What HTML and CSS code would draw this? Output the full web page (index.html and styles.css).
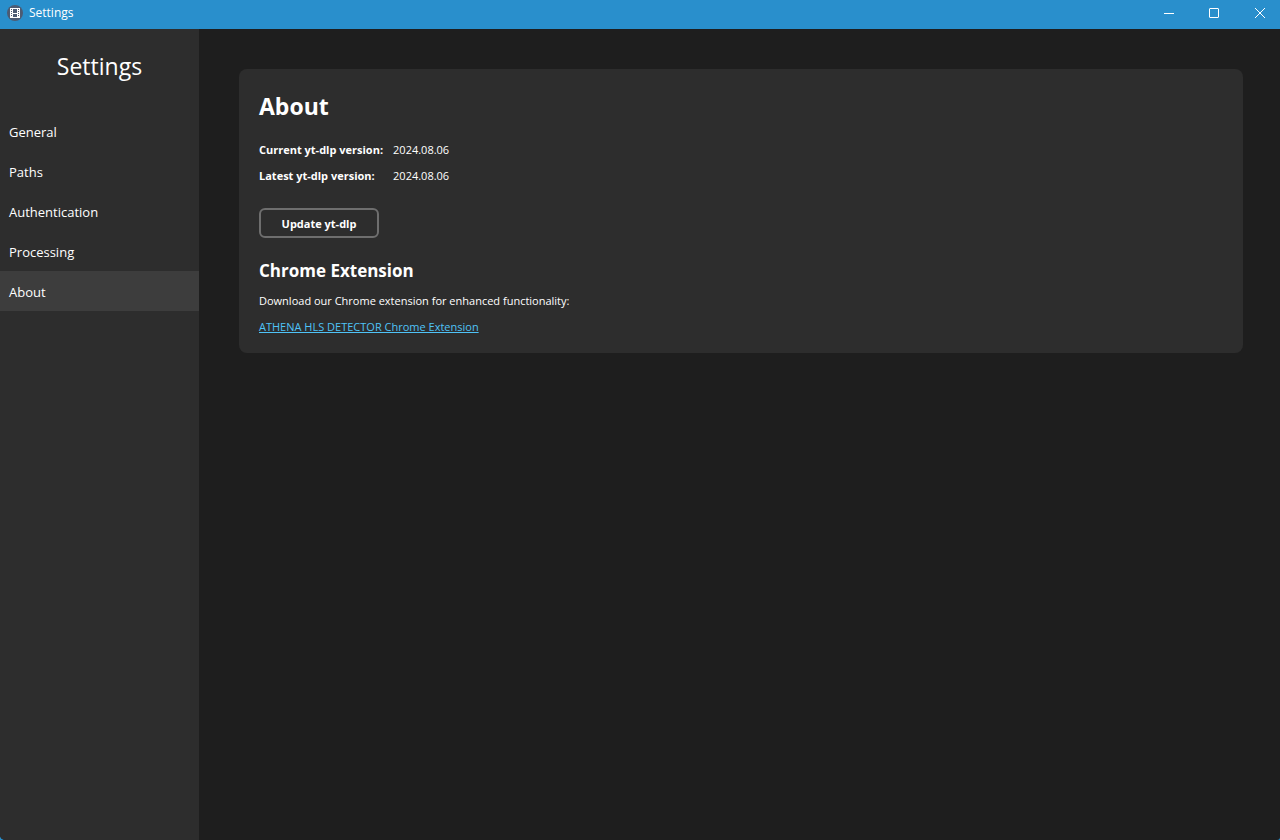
FILE: index.html
```html
<!DOCTYPE html>
<html lang="en">
<head>
<meta charset="utf-8">
<meta name="viewport" content="width=device-width, initial-scale=1">
<title>Settings</title>
<link rel="stylesheet" href="styles.css">
</head>
<body>
<div class="window">
  <header class="titlebar">
    <svg class="app-icon" width="16" height="16" viewBox="0 0 16 16" aria-hidden="true">
      <circle cx="8" cy="8" r="8" fill="#4d5b73"/>
      <path d="M3 3h10v10H3z" fill="#fff"/>
      <path d="M6 4h4v4H6zM6 9h4v3H6zM4 4h1v1H4zM4 6h1v1H4zM4 8h1v1H4zM4 10h1v1H4zM11 4h1v1h-1zM11 6h1v1h-1zM11 8h1v1h-1zM11 10h1v1h-1z" fill="#4d5b73"/>
    </svg>
    <span class="titlebar-text">Settings</span>
    <div class="window-controls">
      <button class="window-button" type="button" aria-label="Minimize">
        <svg width="12" height="12" viewBox="0 0 12 12"><path d="M2 6.5h10" fill="none" stroke="#fff"/></svg>
      </button>
      <button class="window-button" type="button" aria-label="Maximize">
        <svg width="12" height="12" viewBox="0 0 12 12"><rect x="1.5" y="1.5" width="9" height="9" rx=".5" fill="none" stroke="#fff"/></svg>
      </button>
      <button class="window-button" type="button" aria-label="Close">
        <svg width="12" height="12" viewBox="0 0 12 12"><path d="M1 1l10 10M11 1L1 11" fill="none" stroke="#fff"/></svg>
      </button>
    </div>
  </header>
  <div class="layout">
    <aside class="sidebar">
      <h1 class="sidebar-title">Settings</h1>
      <nav class="menu">
        <a class="menu-item" href="#general">General</a>
        <a class="menu-item" href="#paths">Paths</a>
        <a class="menu-item" href="#authentication">Authentication</a>
        <a class="menu-item" href="#processing">Processing</a>
        <a class="menu-item menu-item-active" href="#about" aria-current="page">About</a>
      </nav>
    </aside>
    <main class="content">
      <section class="card" id="about">
        <h2 class="card-title">About</h2>
        <dl class="versions">
          <dt>Current yt-dlp version:</dt>
          <dd>2024.08.06</dd>
          <dt>Latest yt-dlp version:</dt>
          <dd>2024.08.06</dd>
        </dl>
        <button class="update-button" type="button">Update yt-dlp</button>
        <h3 class="section-title">Chrome Extension</h3>
        <p class="text">Download our Chrome extension for enhanced functionality:</p>
        <p class="text"><a class="link" href="#extension">ATHENA HLS DETECTOR Chrome Extension</a></p>
      </section>
    </main>
  </div>
</div>
</body>
</html>
```
FILE: styles.css
```css
* {
  box-sizing: border-box;
}

body {
  margin: 0;
  background: #298fcc;
  color: #fff;
  font: 11px/16px "Segoe UI", "Open Sans", "Noto Sans", sans-serif;
}

h1, h2, h3, p, dl, dd {
  margin: 0;
}

.window {
  display: flex;
  flex-direction: column;
  min-height: 100vh;
}

.titlebar {
  display: flex;
  align-items: center;
  height: 29px;
  padding-left: 7px;
  padding-bottom: 3px;
  background: #298fcc;
}

.titlebar-text {
  margin-left: 6px;
  font-size: 12px;
  line-height: 18px;
}

.window-controls {
  display: flex;
  margin-left: auto;
  margin-right: -3px;
}

.window-button {
  display: flex;
  align-items: center;
  justify-content: center;
  width: 46px;
  height: 26px;
  padding: 0;
  border: 0;
  background: transparent;
}

.layout {
  display: flex;
  flex: 1;
  border-radius: 0 0 3px 5px;
  overflow: hidden;
  background: #1e1e1e;
}

.sidebar {
  flex: none;
  width: 199px;
  padding-top: 20px;
  background: #2d2d2d;
}

.sidebar-title {
  font-size: 23px;
  font-weight: 400;
  line-height: 34px;
  text-align: center;
}

.menu {
  display: flex;
  flex-direction: column;
  margin-top: 28px;
}

.menu-item {
  padding: 2px 9px 0;
  color: #fff;
  font-size: 13px;
  line-height: 38px;
  text-decoration: none;
}

.menu-item-active {
  background: #3d3d3d;
}

.content {
  flex: 1;
  padding: 40px 37px 40px 40px;
}

.card {
  padding: 20px 20px 18px;
  border-radius: 8px;
  background: #2d2d2d;
}

.card-title {
  font-size: 23px;
  font-weight: 700;
  line-height: 34px;
}

.versions {
  display: grid;
  grid-template-columns: max-content 1fr;
  gap: 10px;
  margin-top: 19px;
}

.versions dt {
  font-weight: 700;
}

.update-button {
  display: block;
  height: 30px;
  min-width: 120px;
  margin-top: 24px;
  padding: 2px 16px 0;
  border: 2px solid #6e6e6e;
  border-radius: 6px;
  background: transparent;
  color: #fff;
  font: inherit;
  font-weight: 700;
}

.section-title {
  margin-top: 20px;
  font-size: 17px;
  font-weight: 700;
  line-height: 25px;
}

.text {
  margin-top: 10px;
}

.link {
  color: #4fc3f7;
}
```
